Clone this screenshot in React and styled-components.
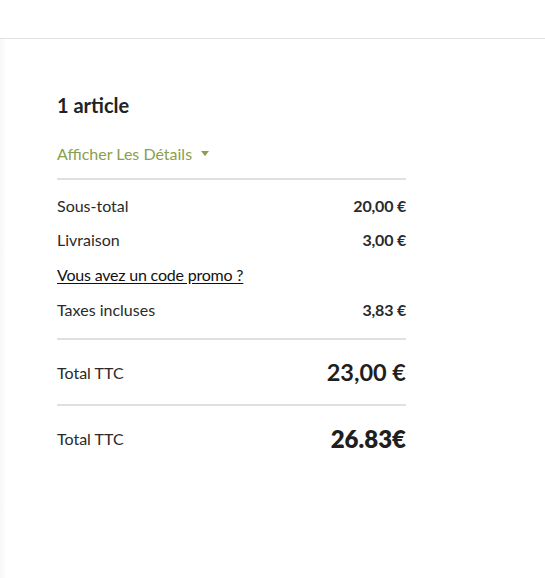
import React from 'react';
import styled, { createGlobalStyle } from 'styled-components';

const GlobalStyle = createGlobalStyle`
  body {
    margin: 0;
    background: #ffffff;
    font-family: 'Lato', 'Liberation Sans', sans-serif;
    color: #222222;
  }
`;

const Page = styled.div`
  width: 545px;
  height: 578px;
  overflow: hidden;
  display: flex;
  flex-direction: column;
`;

const TopBar = styled.div`
  height: 38px;
  flex-shrink: 0;
  border-bottom: 1px solid #e2e2e2;
`;

const Body = styled.div`
  flex: 1;
  display: flex;
`;

const Edge = styled.div`
  width: 6px;
  background: linear-gradient(to right, #f7f7f7, #fbfbfb 60%, #ffffff);
`;

const Summary = styled.section`
  width: 349px;
  padding: 54px 0 0 51px;
`;

const Title = styled.h2`
  margin: 0;
  font-size: 20px;
  font-weight: 700;
  line-height: 24px;
  color: #222222;
`;

const Toggle = styled.button`
  margin-top: 27px;
  padding: 0;
  border: 0;
  background: none;
  display: flex;
  align-items: center;
  gap: 9px;
  font-family: inherit;
  font-size: 16px;
  line-height: 20px;
  color: #8a9f4c;
  cursor: pointer;
`;

const Caret = styled.span`
  width: 0;
  height: 0;
  border-left: 4.5px solid transparent;
  border-right: 4.5px solid transparent;
  border-top: 5px solid #8a9f4c;
  margin-top: -2px;
`;

const Divider = styled.hr`
  margin: ${p => p.$top || 0}px 0 0;
  border: 0;
  height: 2px;
  background: #e0e0e0;
`;

const Lines = styled.div`
  padding-top: 15px;
  display: flex;
  flex-direction: column;
  gap: 14.8px;
`;

const Line = styled.div`
  display: flex;
  justify-content: space-between;
  align-items: center;
  height: 20px;
  font-size: 16px;
  color: #2a2a2a;
`;

const Amount = styled.span`
  font-weight: 700;
  font-size: 16px;
  letter-spacing: -0.2px;
`;

const PromoLink = styled.a`
  font-size: 16px;
  letter-spacing: -0.2px;
  color: #111111;
  text-decoration: underline;
  text-underline-offset: 2px;
  cursor: pointer;
`;

const TotalRow = styled.div`
  display: flex;
  justify-content: space-between;
  align-items: center;
  height: ${p => p.$h || 66}px;
`;

const TotalLabel = styled.span`
  font-size: 16px;
  color: #2a2a2a;
`;

const TotalAmount = styled.span`
  font-size: ${p => (p.$strong ? 24 : 23.5)}px;
  font-weight: ${p => (p.$strong ? 800 : 700)};
  color: #1f1f1f;
`;

const lines = [
  { label: 'Sous-total', value: '20,00 €' },
  { label: 'Livraison', value: '3,00 €' },
  { promo: 'Vous avez un code promo ?' },
  { label: 'Taxes incluses', value: '3,83 €' },
];

export default function App() {
  return (
    <Page>
      <GlobalStyle />
      <TopBar />
      <Body>
        <Edge />
        <Summary>
          <Title>1 article</Title>
          <Toggle>
            Afficher Les Détails <Caret />
          </Toggle>
          <Divider $top={14} />
          <Lines>
            {lines.map((l, i) =>
              l.promo ? (
                <Line key={i}>
                  <PromoLink>{l.promo}</PromoLink>
                </Line>
              ) : (
                <Line key={i}>
                  <span>{l.label}</span>
                  <Amount>{l.value}</Amount>
                </Line>
              )
            )}
          </Lines>
          <Divider $top={19} />
          <TotalRow $h={64}>
            <TotalLabel>Total TTC</TotalLabel>
            <TotalAmount>23,00 €</TotalAmount>
          </TotalRow>
          <Divider />
          <TotalRow $h={64}>
            <TotalLabel>Total TTC</TotalLabel>
            <TotalAmount $strong>26.83€</TotalAmount>
          </TotalRow>
        </Summary>
      </Body>
    </Page>
  );
}
